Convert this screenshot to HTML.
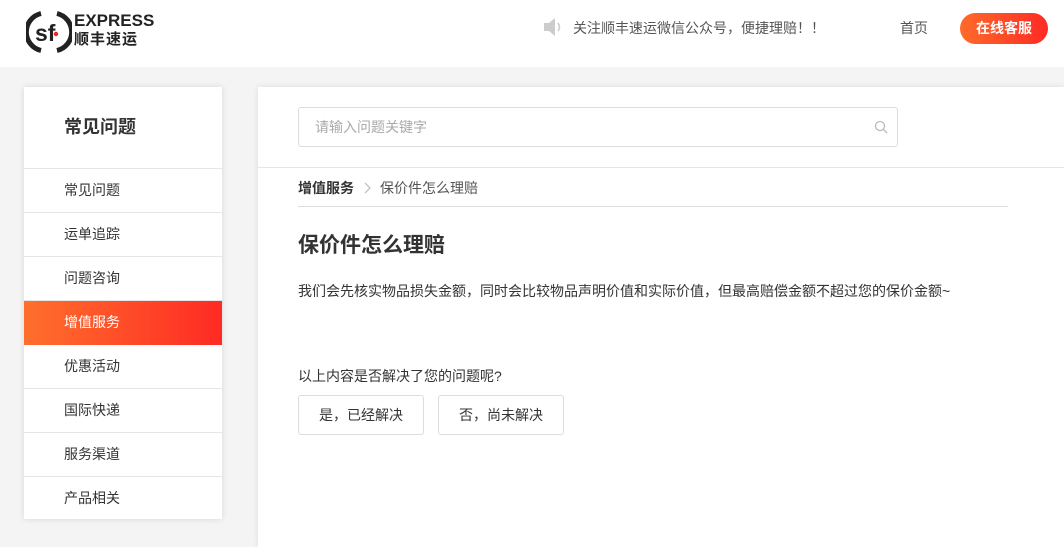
<!DOCTYPE html>
<html><head><meta charset="utf-8"><style>
*{margin:0;padding:0;box-sizing:border-box}
body{width:1064px;height:540px;overflow:hidden;background:#f4f4f4;font-family:"Liberation Sans","Noto Sans CJK SC",sans-serif;color:#333;position:relative}
.hdr{position:absolute;left:0;top:0;width:1064px;height:67px;background:#fff}
.abs{position:absolute}
.side{position:absolute;left:24px;top:87px;width:198px;height:432px;background:#fff;box-shadow:0 0 6px rgba(0,0,0,.12)}
.side .t{height:82px;line-height:80px;padding-left:40px;font-size:18px;font-weight:bold;color:#333;border-bottom:1px solid #e5e5e5}
.side .i{height:44px;line-height:43px;padding-left:40px;font-size:14px;color:#333;border-bottom:1px solid #e5e5e5}
.side .a{background:linear-gradient(90deg,#ff6f2c,#ff2a24);color:#fff;border-bottom:none}
.main{position:absolute;left:258px;top:87px;width:806px;height:460px;background:#fff;box-shadow:0 0 6px rgba(0,0,0,.1)}
.btn{position:absolute;top:308px;width:126px;height:40px;border:1px solid #ddd;border-radius:3px;font-size:14px;color:#333;text-align:center;line-height:38px}
</style></head><body>
<div class="hdr">
 <svg class="abs" style="left:26px;top:10px" width="46" height="44" viewBox="0 0 46 44">
  <path d="M15 3.5 A19 19 0 0 0 15 40.5" fill="none" stroke="#222" stroke-width="5"/>
  <path d="M31 3.5 A19 19 0 0 1 31 40.5" fill="none" stroke="#222" stroke-width="5"/>
  <text x="9" y="31" font-family="Liberation Sans" font-weight="bold" font-size="23" fill="#222">sf</text>
  <circle cx="30" cy="24" r="2.2" fill="#e22"/>
 </svg>
 <div class="abs" style="left:74px;top:12px;font-size:17px;font-weight:bold;color:#222;line-height:18px">EXPRESS</div>
 <div class="abs" style="left:74px;top:31px;font-size:15px;font-weight:bold;color:#222;letter-spacing:1px;line-height:18px">顺丰速运</div>
 <svg class="abs" style="left:543px;top:17px" width="22" height="20" viewBox="0 0 22 20"><path d="M1 6h5l6-5v18l-6-5H1z" fill="#ccc"/><path d="M15 6q3 4 0 8" fill="none" stroke="#ccc" stroke-width="1.6"/></svg>
 <div class="abs" style="left:573px;top:18px;font-size:14px;color:#555">关注顺丰速运微信公众号，便捷理赔！！</div>
 <div class="abs" style="left:900px;top:18px;font-size:14px;color:#555">首页</div>
 <div class="abs" style="left:960px;top:13px;width:88px;height:31px;border-radius:16px;background:linear-gradient(90deg,#ff6a2a,#ff2b25);color:#fff;font-size:14px;font-weight:bold;text-align:center;line-height:31px">在线客服</div>
</div>
<div class="side">
 <div class="t">常见问题</div>
 <div class="i">常见问题</div><div class="i">运单追踪</div><div class="i">问题咨询</div>
 <div class="i a">增值服务</div>
 <div class="i">优惠活动</div><div class="i">国际快递</div><div class="i">服务渠道</div><div class="i" style="border:none">产品相关</div>
</div>
<div class="main">
 <div class="abs" style="left:40px;top:20px;width:600px;height:40px;border:1px solid #ddd;border-radius:3px;font-size:14px;color:#aaa;line-height:38px;padding-left:16px">请输入问题关键字</div>
 <svg class="abs" style="left:616px;top:33px" width="14" height="14" viewBox="0 0 14 14"><circle cx="6" cy="6" r="4.5" fill="none" stroke="#bbb" stroke-width="1.3"/><path d="M9.5 9.5L13 13" stroke="#bbb" stroke-width="1.3"/></svg>
 <div class="abs" style="left:0;top:80px;width:806px;border-top:1px solid #e5e5e5"></div>
 <div class="abs" style="left:40px;top:91px;font-size:14px;font-weight:bold;color:#333">增值服务</div>
 <svg class="abs" style="left:105px;top:95px" width="8" height="12" viewBox="0 0 8 12"><path d="M2 1l5 5-5 5" fill="none" stroke="#bbb" stroke-width="1.2"/></svg>
 <div class="abs" style="left:122px;top:91px;font-size:14px;color:#555">保价件怎么理赔</div>
 <div class="abs" style="left:40px;top:119px;width:710px;border-top:1px solid #ddd"></div>
 <div class="abs" style="left:40px;top:142px;font-size:21px;font-weight:bold;color:#333">保价件怎么理赔</div>
 <div class="abs" style="left:40px;top:194px;font-size:14px;color:#333">我们会先核实物品损失金额，同时会比较物品声明价值和实际价值，但最高赔偿金额不超过您的保价金额~</div>
 <div class="abs" style="left:40px;top:279px;font-size:14px;color:#333">以上内容是否解决了您的问题呢?</div>
 <div class="btn" style="left:40px">是，已经解决</div>
 <div class="btn" style="left:180px">否，尚未解决</div>
</div>
</body></html>
